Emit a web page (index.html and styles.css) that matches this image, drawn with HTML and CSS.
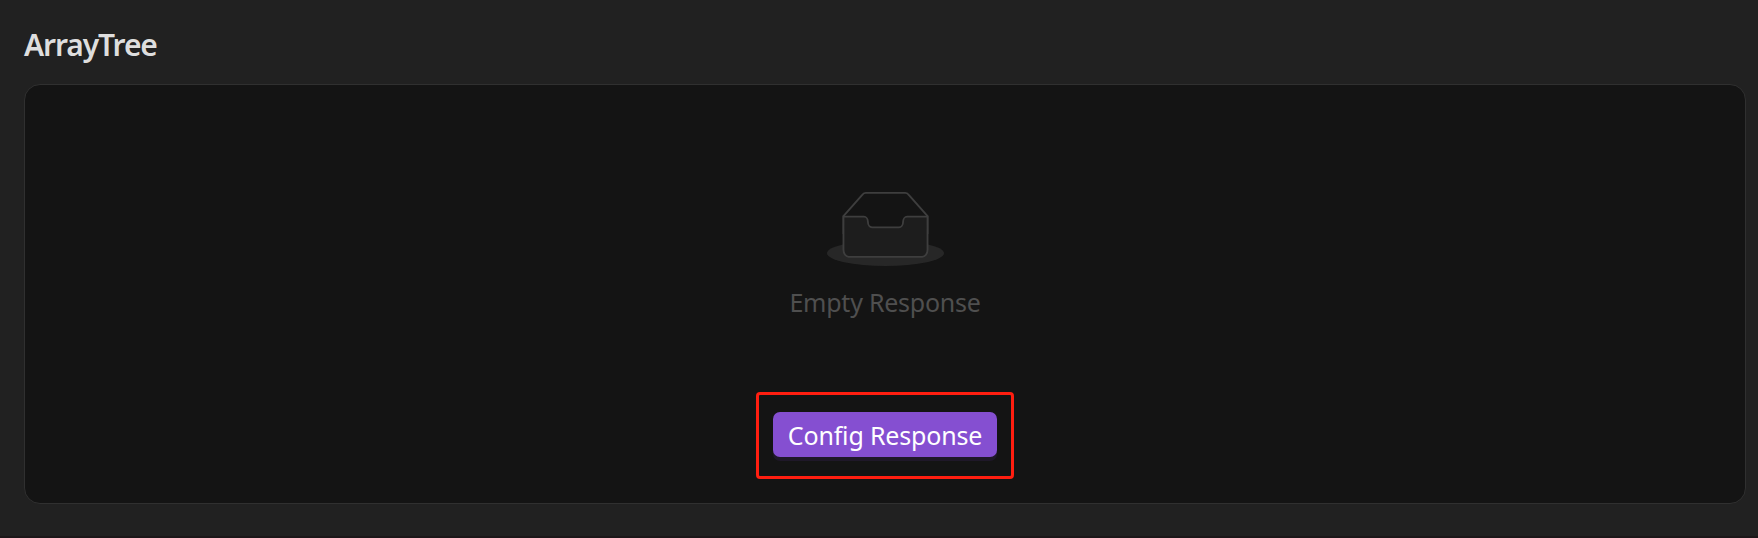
FILE: index.html
```html
<!DOCTYPE html>
<html lang="en">
<head>
<meta charset="utf-8">
<title>ArrayTree</title>
<link rel="stylesheet" href="styles.css">
</head>
<body>
<main class="page">
  <h1 class="title">ArrayTree</h1>
  <section class="card">
    <svg class="empty-icon" viewBox="0 0 64 41">
      <g transform="translate(0 1)" fill="none">
        <ellipse class="empty-shadow" cx="32" cy="33" rx="32" ry="7"/>
        <g class="empty-box">
          <path d="M55 12.76L44.854 1.258C44.367.474 43.656 0 42.907 0H21.093c-.749 0-1.46.474-1.947 1.257L9 12.761V22h46v-9.24z"/>
          <path class="empty-front" d="M41.613 15.931c0-1.605.994-2.93 2.227-2.931H55v18.137C55 33.26 53.68 35 52.05 35h-40.1C10.32 35 9 33.259 9 31.137V13h11.16c1.233 0 2.227 1.323 2.227 2.928v.022c0 1.605 1.005 2.901 2.237 2.901h14.752c1.232 0 2.237-1.308 2.237-2.913v-.007z"/>
        </g>
      </g>
    </svg>
    <p class="empty-text">Empty Response</p>
    <div class="highlight"><button class="button" type="button">Config Response</button></div>
  </section>
</main>
</body>
</html>
```
FILE: styles.css
```css
* { box-sizing: border-box; }
body {
  margin: 0;
  background: #212121;
  font-family: "Segoe UI", "Noto Sans", "Open Sans", sans-serif;
}
.page {
  height: 538px;
  padding: 24px 12px 0 24px;
  border-bottom: 2px solid #1c1719;
}
.title {
  height: 44px;
  margin: 0 0 16px;
  color: #dedede;
  font-size: 30px;
  line-height: 42px;
  font-weight: 600;
  letter-spacing: -1.1px;
}
.card {
  height: 420px;
  display: flex;
  flex-direction: column;
  align-items: center;
  padding-top: 106px;
  background: #141414;
  border: 1px solid #303030;
  border-radius: 16px;
}
.empty-icon { flex: none; width: 117px; height: 75px; }
.empty-shadow { fill: #272727; }
.empty-box { stroke: #3e3e3e; }
.empty-front { fill: #1d1d1d; }
.empty-text {
  margin: 16px 0 0;
  height: 41px;
  color: #4f4f4f;
  font-size: 25px;
  line-height: 40px;
  letter-spacing: -0.25px;
  white-space: nowrap;
}
.highlight {
  width: 258px;
  height: 87px;
  margin-top: 69px;
  padding: 17px 14px;
  border: 3px solid #ff1e10;
  border-radius: 4px;
}
.button {
  display: block;
  width: 224px;
  height: 45px;
  padding: 2px 0 0;
  border: 0;
  border-radius: 7px;
  background: #854fd1;
  box-shadow: 0 4px 0 #1f1829;
  color: #fff;
  font: inherit;
  font-size: 25px;
  line-height: 43px;
  letter-spacing: -0.18px;
  white-space: nowrap;
}
```
